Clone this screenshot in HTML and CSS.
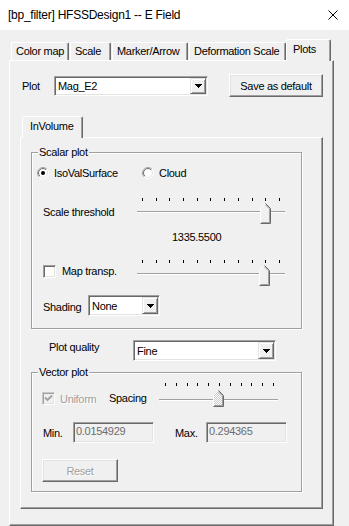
FILE: index.html
```html
<!DOCTYPE html>
<html>
<head>
<meta charset="utf-8">
<link rel="stylesheet" href="styles.css">
</head>
<body>
<div class="titlebar">
  <span class="title">[bp_filter] HFSSDesign1 -- E Field</span>
  <svg class="close" width="10" height="10" viewBox="0 0 10 10"><path d="M0.5 0.5 L9.5 9.5 M9.5 0.5 L0.5 9.5" stroke="#000" stroke-width="1" fill="none"/></svg>
</div>
<div class="client">
  <div class="tabstrip">
    <div class="tab w1">Color map</div>
    <div class="tab w2">Scale</div>
    <div class="tab w3">Marker/Arrow</div>
    <div class="tab w4">Deformation Scale</div>
    <div class="tab sel w5">Plots</div>
  </div>
  <div class="panel outer">
    <div class="plot-row">
      <span class="plot-lbl">Plot</span>
      <div class="combo c-plot"><span class="ctext">Mag_E2</span><span class="cbtn"><svg width="7" height="4" viewBox="0 0 7 4"><path d="M0 0h7v1H0zM1 1h5v1H1zM2 2h3v1H2zM3 3h1v1H3z"/></svg></span></div>
      <div class="btn save">Save as default</div>
    </div>
    <div class="tabstrip istrip">
      <div class="tab sel invol">InVolume</div>
    </div>
    <div class="panel inner">
      <fieldset class="group scalar">
        <legend>Scalar plot</legend>
        <div class="radios">
          <div class="opt o1">
            <svg class="radio" width="12" height="12" viewBox="0 0 12 12"><defs><linearGradient id="ro" x1="0" y1="0" x2="1" y2="1"><stop offset="0.45" stop-color="#a0a0a0"/><stop offset="0.55" stop-color="#ffffff"/></linearGradient><linearGradient id="ri" x1="0" y1="0" x2="1" y2="1"><stop offset="0.45" stop-color="#696969"/><stop offset="0.55" stop-color="#e3e3e3"/></linearGradient></defs><circle cx="6" cy="6" r="5.5" fill="#fff" stroke="url(#ro)"/><circle cx="6" cy="6" r="4.5" fill="#fff" stroke="url(#ri)"/><circle cx="6" cy="6" r="2" fill="#000"/></svg>
            <span>IsoValSurface</span>
          </div>
          <div class="opt">
            <svg class="radio" width="12" height="12" viewBox="0 0 12 12"><circle cx="6" cy="6" r="5.5" fill="#fff" stroke="url(#ro)"/><circle cx="6" cy="6" r="4.5" fill="#fff" stroke="url(#ri)"/></svg>
            <span>Cloud</span>
          </div>
        </div>
        <div class="srow thr">
          <span class="slbl">Scale threshold</span>
          <div class="slider">
            <div class="ticks"><i></i><i></i><i></i><i></i><i></i><i></i><i></i><i></i><i></i><i></i><i></i></div>
            <div class="track"></div>
            <svg class="thumb" style="left:123px" width="11" height="21" viewBox="0 0 11 21"><path d="M0.5 20.5V5.5L5.5 0.5L10.5 5.5V20.5Z" fill="#f0f0f0"/><path d="M0.5 20V5.5L5.5 0.5" stroke="#fff" fill="none"/><path d="M5.5 0.5L10.5 5.5V20.5H0.5" stroke="#696969" fill="none"/><path d="M5.5 1.9L9.5 5.9V19.5H1.5" stroke="#a0a0a0" fill="none"/></svg>
          </div>
        </div>
        <div class="value">1335.5500</div>
        <div class="srow map">
          <div class="cklbl">
            <span class="check"></span>
            <span>Map transp.</span>
          </div>
          <div class="slider">
            <div class="ticks"><i></i><i></i><i></i><i></i><i></i><i></i><i></i><i></i><i></i><i></i><i></i></div>
            <div class="track"></div>
            <svg class="thumb" style="left:122px" width="11" height="21" viewBox="0 0 11 21"><path d="M0.5 20.5V5.5L5.5 0.5L10.5 5.5V20.5Z" fill="#f0f0f0"/><path d="M0.5 20V5.5L5.5 0.5" stroke="#fff" fill="none"/><path d="M5.5 0.5L10.5 5.5V20.5H0.5" stroke="#696969" fill="none"/><path d="M5.5 1.9L9.5 5.9V19.5H1.5" stroke="#a0a0a0" fill="none"/></svg>
          </div>
        </div>
        <div class="shade-row">
          <span class="shade-lbl">Shading</span>
          <div class="combo c-shade"><span class="ctext">None</span><span class="cbtn"><svg width="7" height="4" viewBox="0 0 7 4"><path d="M0 0h7v1H0zM1 1h5v1H1zM2 2h3v1H2zM3 3h1v1H3z"/></svg></span></div>
        </div>
      </fieldset>
      <div class="quality-row">
        <span class="q-lbl">Plot quality</span>
        <div class="combo c-qual"><span class="ctext">Fine</span><span class="cbtn"><svg width="7" height="4" viewBox="0 0 7 4"><path d="M0 0h7v1H0zM1 1h5v1H1zM2 2h3v1H2zM3 3h1v1H3z"/></svg></span></div>
      </div>
      <fieldset class="group vector">
        <legend>Vector plot</legend>
        <div class="vrow">
          <div class="uni">
            <span class="check dis"><svg width="9" height="9" viewBox="0 0 9 9"><path d="M1 3.5L3.5 6L8 1.5" stroke="#a0a0a0" stroke-width="1.8" fill="none"/></svg></span>
            <span class="gray">Uniform</span>
          </div>
          <span class="spacing">Spacing</span>
          <div class="slider vs">
            <div class="ticks"><i></i><i></i><i></i><i></i><i></i><i></i><i></i><i></i><i></i><i></i><i></i></div>
            <div class="track"></div>
            <svg class="thumb" style="left:54px" width="11" height="17" viewBox="0 0 11 17"><defs><pattern id="hatch" width="2" height="2" patternUnits="userSpaceOnUse"><rect width="2" height="2" fill="#ffffff"/><rect width="1" height="1" fill="#c8c8c8"/><rect x="1" y="1" width="1" height="1" fill="#c8c8c8"/></pattern></defs><path d="M0.5 16.5V5.5L5.5 0.5L10.5 5.5V16.5Z" fill="url(#hatch)"/><path d="M0.5 16V5.5L5.5 0.5" stroke="#fff" fill="none"/><path d="M5.5 0.5L10.5 5.5V16.5H0.5" stroke="#696969" fill="none"/><path d="M5.5 1.9L9.5 5.9V15.5H1.5" stroke="#a0a0a0" fill="none"/></svg>
          </div>
        </div>
        <div class="mm-row">
          <span class="min-lbl">Min.</span>
          <div class="edit">0.0154929</div>
          <span class="max-lbl">Max.</span>
          <div class="edit">0.294365</div>
        </div>
        <div class="btn reset">Reset</div>
      </fieldset>
    </div>
  </div>
</div>
</body>
</html>
```

FILE: styles.css
```css
* { box-sizing: border-box; }
html, body { margin: 0; padding: 0; }
body {
  width: 349px;
  height: 526px;
  overflow: hidden;
  background: #f0f0f0;
  font-family: "Liberation Sans", Arial, sans-serif;
  font-size: 11px;
  letter-spacing: -0.3px;
  color: #000;
}
.titlebar {
  height: 30px;
  background: #fff;
  display: flex;
  align-items: center;
  justify-content: space-between;
  padding: 0 11px 0 8px;
  font-size: 12px;
  letter-spacing: -0.25px;
}
.close { display: block; }
.client { padding: 9px 0 0 9px; }

.tabstrip {
  display: flex;
  align-items: flex-end;
  height: 21px;
  padding-left: 2px;
}
.tab {
  height: 18px;
  border-top: 1px solid #fff;
  border-left: 1px solid #fff;
  border-right: 1px solid #696969;
  box-shadow: inset -1px 0 #a0a0a0;
  border-radius: 2px 2px 0 0;
  padding-left: 4px;
  line-height: 16px;
  white-space: nowrap;
  background: #f0f0f0;
}
.tab.sel {
  height: 22px;
  margin-bottom: -1px;
  position: relative;
  z-index: 1;
  padding-top: 1px;
}
.w1 { width: 58px; margin-right: 1px; }
.w2 { width: 41px; margin-right: 1px; }
.w3 { width: 76px; margin-right: 1px; }
.w4 { width: 97px; }
.w5 { width: 45px; padding-left: 6px; }

.panel {
  border-top: 1px solid #fff;
  border-left: 1px solid #fff;
  border-right: 1px solid #696969;
  border-bottom: 1px solid #696969;
  box-shadow: inset -1px -1px #a0a0a0;
}
.outer { width: 325px; height: 466px; }
.inner { width: 303px; height: 372px; margin-left: 10px; }

.plot-row {
  display: flex;
  align-items: center;
  height: 23px;
  margin-top: 13px;
  padding-left: 12px;
}
.plot-lbl { width: 32px; }
.c-plot { width: 154px; height: 20px; }
.save { width: 94px; height: 23px; margin-left: 21px; }

.istrip { margin-top: 19px; margin-left: 10px; }
.invol { width: 61px; padding-left: 7px; }

.combo {
  display: flex;
  align-items: center;
  border: 1px solid;
  border-color: #a0a0a0 #fff #fff #a0a0a0;
  box-shadow: inset 1px 1px #696969, inset -1px -1px #e3e3e3;
  background: #fff;
  padding: 1px;
}
.ctext { flex: 1; padding-left: 2px; }
.cbtn {
  width: 16px;
  height: 100%;
  display: flex;
  align-items: center;
  justify-content: center;
  border: 1px solid;
  border-color: #e3e3e3 #696969 #696969 #e3e3e3;
  box-shadow: inset 1px 1px #fff, inset -1px -1px #a0a0a0;
  background: #f0f0f0;
}
.cbtn svg { display: block; fill: #000; }

.btn {
  display: flex;
  align-items: center;
  justify-content: center;
  border: 1px solid;
  border-color: #fff #696969 #696969 #fff;
  box-shadow: inset -1px -1px #a0a0a0, inset 1px 1px #e3e3e3;
  background: #f0f0f0;
}

.group {
  margin: 8px 0 0 10px;
  padding: 0;
  width: 271px;
  min-width: 0;
  border: 1px solid #a0a0a0;
  box-shadow: inset 1px 1px #fff, 1px 1px #fff;
}
.group legend {
  margin-left: 6px;
  padding: 0 1px;
  line-height: 13px;
  background: #f0f0f0;
}
.scalar { padding-bottom: 12px; }
.vector { margin-top: 5px; padding-bottom: 9px; }

.radios {
  display: flex;
  align-items: center;
  height: 14px;
  margin: 7px 0 0 5px;
}
.opt { display: flex; align-items: center; gap: 5px; }
.o1 { width: 105px; }
.radio { display: block; }

.srow { display: flex; margin-left: 11px; }
.thr { margin-top: 18px; }
.map { margin-top: 16px; }
.slbl { width: 94px; line-height: 13px; padding-top: 8px; }
.cklbl {
  width: 94px;
  height: 22px;
  display: flex;
  align-items: center;
  gap: 6px;
}

.slider { position: relative; width: 148px; height: 26px; }
.ticks {
  display: flex;
  justify-content: space-between;
  height: 3px;
  margin: 0 5px;
}
.ticks i { display: block; width: 1px; height: 3px; background: #000; }
.track {
  margin-top: 10px;
  height: 2px;
  border-top: 1px solid #a0a0a0;
  border-bottom: 1px solid #fff;
}
.thumb { position: absolute; top: 5px; display: block; }

.value { margin: 7px 0 0 140px; line-height: 13px; }

.check {
  display: flex;
  align-items: center;
  justify-content: center;
  width: 13px;
  height: 13px;
  border: 1px solid;
  border-color: #a0a0a0 #fff #fff #a0a0a0;
  box-shadow: inset 1px 1px #696969, inset -1px -1px #e3e3e3;
  background: #fff;
}
.check.dis {
  background: #f0f0f0;
  border-color: #c8c8c8 #fff #fff #c8c8c8;
  box-shadow: inset 1px 1px #a0a0a0, inset -1px -1px #e3e3e3;
}
.check svg { display: block; }

.shade-row {
  display: flex;
  align-items: center;
  margin: 9px 0 0 11px;
  height: 21px;
}
.shade-lbl { width: 45px; padding-top: 2px; }
.c-shade { width: 72px; height: 21px; }

.quality-row {
  display: flex;
  align-items: flex-start;
  margin: 11px 0 0 28px;
  height: 21px;
}
.q-lbl { width: 84px; line-height: 14px; }
.c-qual { width: 143px; height: 21px; }

.vrow {
  display: flex;
  align-items: flex-start;
  height: 25px;
  margin: 4px 0 0 10px;
}
.uni {
  width: 67px;
  display: flex;
  align-items: center;
  gap: 5px;
  margin-top: 9px;
  height: 13px;
}
.gray { color: #a0a0a0; text-shadow: 1px 1px 0 #fff; }
.spacing { width: 50px; margin-top: 9px; line-height: 13px; }
.slider.vs { width: 119px; height: 25px; }
.vs .ticks { margin: 0 4px 0 6px; }
.vs .track { margin-top: 13px; }
.vs .thumb { top: 7px; }

.mm-row {
  display: flex;
  align-items: center;
  height: 21px;
  margin: 14px 0 0 11px;
}
.min-lbl { width: 30px; }
.max-lbl { width: 31px; margin-left: 21px; }
.edit {
  width: 81px;
  height: 21px;
  border: 1px solid;
  border-color: #a0a0a0 #fff #fff #a0a0a0;
  box-shadow: inset 1px 1px #696969, inset -1px -1px #e3e3e3;
  background: #f0f0f0;
  color: #6d6d6d;
  padding: 1px 0 0 2px;
  line-height: 14px;
}
.reset {
  width: 76px;
  height: 23px;
  margin: 16px 0 0 10px;
  color: #a0a0a0;
  text-shadow: 1px 1px 0 #fff;
}
```
